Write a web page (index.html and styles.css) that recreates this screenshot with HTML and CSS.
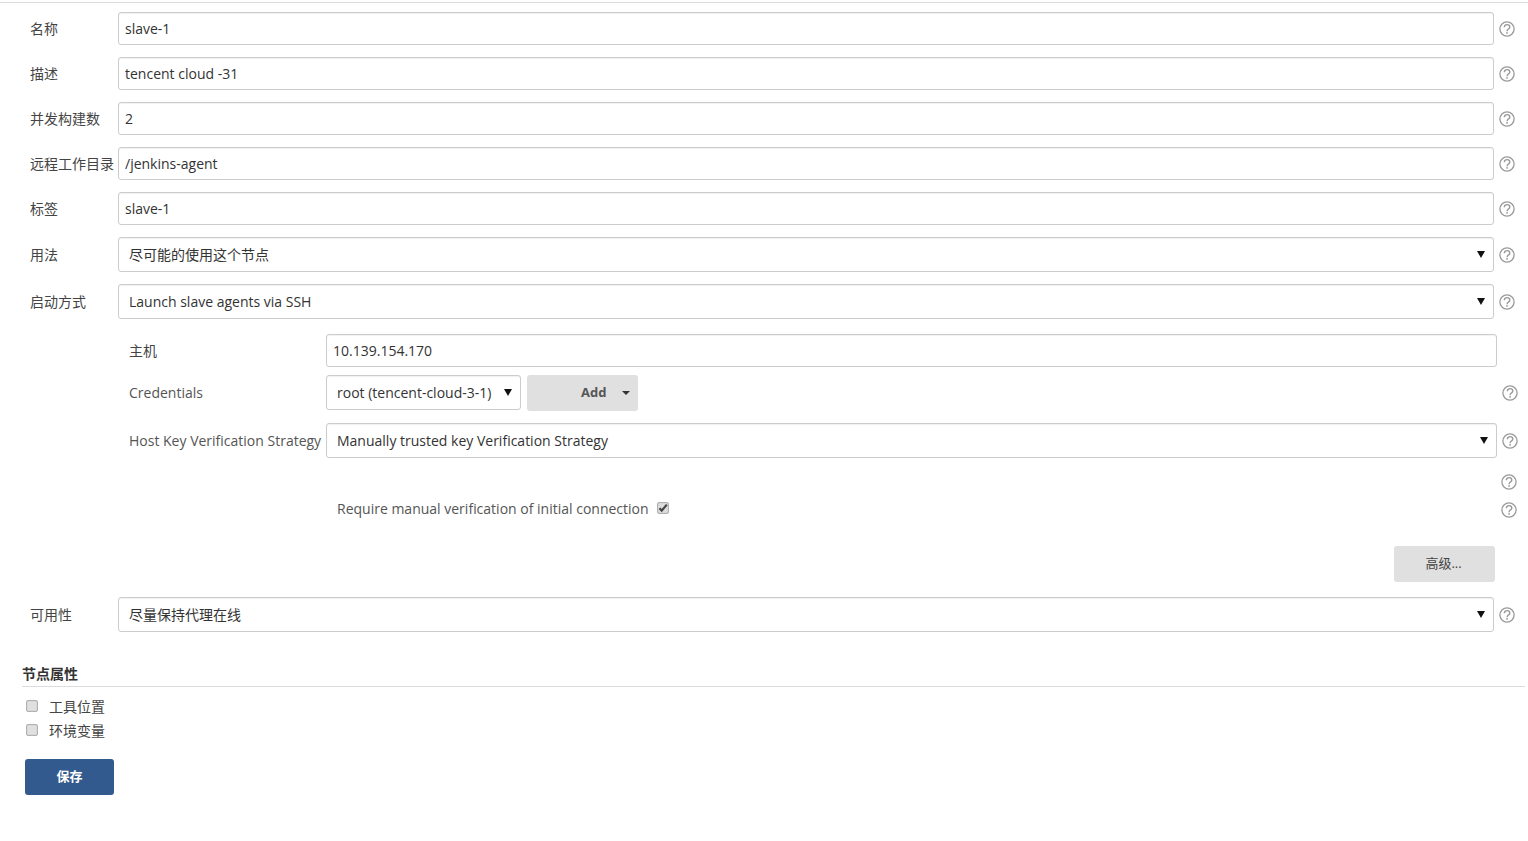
FILE: index.html
```html
<!DOCTYPE html>
<html lang="zh">
<head>
<meta charset="utf-8">
<title>slave-1</title>
<link rel="stylesheet" href="styles.css">
</head>
<body>
<svg class="sprite" width="0" height="0" aria-hidden="true">
  <symbol id="help" viewBox="0 0 16 16">
    <circle cx="8" cy="8" r="7.1" fill="none" stroke="#9a9a9a" stroke-width="1.3"/>
    <path d="M5.3 6.2C5.4 4.6 6.6 3.6 8.1 3.6c1.5 0 2.7 1 2.7 2.4 0 1.1-.7 1.7-1.5 2.2-.8.5-1.2 1-1.2 2" fill="none" stroke="#9a9a9a" stroke-width="1.4"/>
    <rect x="7.3" y="11.1" width="1.5" height="1.6" fill="#9a9a9a"/>
  </symbol>
</svg>
<form class="page">
  <div class="rows">
    <div class="row">
      <label class="lbl">名称</label>
      <input class="field" type="text" value="slave-1">
      <svg class="help"><use href="#help"/></svg>
    </div>
    <div class="row">
      <label class="lbl">描述</label>
      <input class="field" type="text" value="tencent cloud -31">
      <svg class="help"><use href="#help"/></svg>
    </div>
    <div class="row">
      <label class="lbl">并发构建数</label>
      <input class="field" type="text" value="2">
      <svg class="help"><use href="#help"/></svg>
    </div>
    <div class="row">
      <label class="lbl">远程工作目录</label>
      <input class="field" type="text" value="/jenkins-agent">
      <svg class="help"><use href="#help"/></svg>
    </div>
    <div class="row">
      <label class="lbl">标签</label>
      <input class="field" type="text" value="slave-1">
      <svg class="help"><use href="#help"/></svg>
    </div>
    <div class="row">
      <label class="lbl">用法</label>
      <div class="select grow"><select><option>尽可能的使用这个节点</option></select></div>
      <svg class="help"><use href="#help"/></svg>
    </div>
    <div class="row">
      <label class="lbl">启动方式</label>
      <div class="select grow"><select><option>Launch slave agents via SSH</option></select></div>
      <svg class="help"><use href="#help"/></svg>
    </div>
  </div>

  <div class="sub">
    <div class="subrow host-row">
      <label class="sublbl dark raised">主机</label>
      <input class="field" type="text" value="10.139.154.170">
    </div>
    <div class="subrow">
      <label class="sublbl raised">Credentials</label>
      <div class="cred">
        <div class="select cred-select"><select><option>root (tencent-cloud-3-1)</option></select></div>
        <button type="button" class="btn add">Add<span class="caret"></span></button>
      </div>
      <svg class="help help-sub"><use href="#help"/></svg>
    </div>
    <div class="subrow">
      <label class="sublbl">Host Key Verification Strategy</label>
      <div class="select grow"><select><option>Manually trusted key Verification Strategy</option></select></div>
      <svg class="help help-sub"><use href="#help"/></svg>
    </div>
    <div class="lone-help"><svg class="help"><use href="#help"/></svg></div>
    <div class="check-row">
      <label class="check-label" for="verify">Require manual verification of initial connection</label>
      <input class="check on" id="verify" type="checkbox" checked>
      <svg class="help"><use href="#help"/></svg>
    </div>
    <div class="adv-row"><button type="button" class="btn adv">高级...</button></div>
  </div>

  <div class="row avail">
    <label class="lbl">可用性</label>
    <div class="select grow"><select><option>尽量保持代理在线</option></select></div>
    <svg class="help"><use href="#help"/></svg>
  </div>

  <div class="section-title">节点属性</div>
  <div class="opts">
    <label class="opt"><input class="check" type="checkbox"><span>工具位置</span></label>
    <label class="opt"><input class="check" type="checkbox"><span>环境变量</span></label>
  </div>
  <button type="button" class="btn save">保存</button>
</form>
</body>
</html>
```
FILE: styles.css
```css
* { box-sizing: border-box; }
html, body { margin: 0; padding: 0; background: #fff; }
body {
  font-family: "Open Sans", "Noto Sans CJK SC", sans-serif;
  font-size: 14px;
  color: #333;
  height: 841px;
  overflow: hidden;
}
.sprite { position: absolute; }
.page { display: block; border-top: 1px solid #ddd; margin-top: 2px; height: 839px; }
.rows { display: flex; flex-direction: column; gap: 12px; padding-top: 9px; }
.row { display: flex; align-items: center; padding-left: 30px; }
.lbl { width: 88px; flex: none; white-space: nowrap; color: #444; padding-bottom: 2px; }
.field {
  flex: 1;
  min-width: 0;
  height: 33px;
  padding: 0 6px;
  border: 1px solid #ccc;
  border-radius: 3px;
  font: inherit;
  color: #333;
  background: #fff;
  box-shadow: inset 0 1px 1px rgba(0,0,0,.06);
}
.help { width: 16px; height: 16px; flex: none; margin: 0 13px 0 5px; }
.select { position: relative; height: 35px; }
.select::after {
  content: "";
  position: absolute;
  right: 9px;
  top: 14px;
  border-left: 4px solid transparent;
  border-right: 4px solid transparent;
  border-top: 7px solid #111;
}
.select select {
  appearance: none;
  -webkit-appearance: none;
  display: block;
  width: 100%;
  height: 100%;
  padding: 0 24px 0 10px;
  border: 1px solid #ccc;
  border-radius: 3px;
  font: inherit;
  color: #333;
  background: #fff;
  box-shadow: inset 0 1px 1px rgba(0,0,0,.06);
}
.grow { flex: 1; min-width: 0; }
.sub { padding: 15px 0 0 129px; }
.subrow { display: flex; align-items: center; margin-bottom: 12px; }
.host-row { margin-bottom: 8px; padding-right: 31px; }
.sublbl { width: 197px; flex: none; white-space: nowrap; color: #555; }
.sublbl.dark { color: #444; }
.sublbl.raised { padding-bottom: 2px; }
.help-sub { margin: 0 10px 0 5px; }
.cred { display: flex; flex: 1; gap: 6px; }
.cred-select { width: 195px; }
.btn {
  border: 0;
  border-radius: 3px;
  font: inherit;
  background: #e0e0e0;
  color: #555;
}
.add { width: 111px; height: 36px; font-size: 13px; font-weight: 700; padding: 0 0 2px 54px; display: flex; align-items: center; gap: 16px; }
.caret { border-left: 4px solid transparent; border-right: 4px solid transparent; border-top: 4px solid #333; margin-top: 2px; }
.lone-help { display: flex; justify-content: flex-end; margin-top: 16px; height: 16px; }
.lone-help .help, .check-row .help { margin: 0 11px 0 0; }
.check-row { display: flex; align-items: center; padding-left: 208px; margin-top: 12px; height: 16px; }
.check-label { color: #555; padding-bottom: 4px; }
.check {
  appearance: none;
  -webkit-appearance: none;
  width: 12px;
  height: 12px;
  margin: 0;
  border: 1px solid #b0b0b0;
  border-radius: 2px;
  background: #e0e0e0;
  flex: none;
  box-shadow: inset 0 0 1px rgba(0,0,0,.25);
}
.check.on {
  margin: 0 auto 4px 8px;
  background: #ddd url("data:image/svg+xml,%3Csvg xmlns='http://www.w3.org/2000/svg' viewBox='0 0 10 10'%3E%3Cpath d='M1.5 5.2l2.2 2.4L8.8 1.6' fill='none' stroke='%23444' stroke-width='2.2'/%3E%3C/svg%3E") center/contain no-repeat;
}
.adv-row { display: flex; justify-content: flex-end; padding: 28px 33px 0 0; }
.adv { width: 101px; height: 36px; font-size: 13px; padding: 0 2px 3px 0; color: #444; }
.avail { margin-top: 15px; }
.section-title {
  margin: 32px 3px 0 22px;
  height: 23px;
  border-bottom: 1px solid #ddd;
  font-size: 14px;
  font-weight: 700;
  color: #333;
  line-height: 19px;
}
.opts { display: flex; flex-direction: column; gap: 4px; padding: 9px 0 0 26px; }
.opt { display: flex; align-items: center; gap: 11px; height: 20px; color: #444; }
.save {
  display: block;
  margin: 19px 0 0 25px;
  width: 89px;
  height: 36px;
  padding: 0 0 3px;
  background: #335a8e;
  color: #fff;
  font-size: 13px;
  font-weight: 700;
}
```
